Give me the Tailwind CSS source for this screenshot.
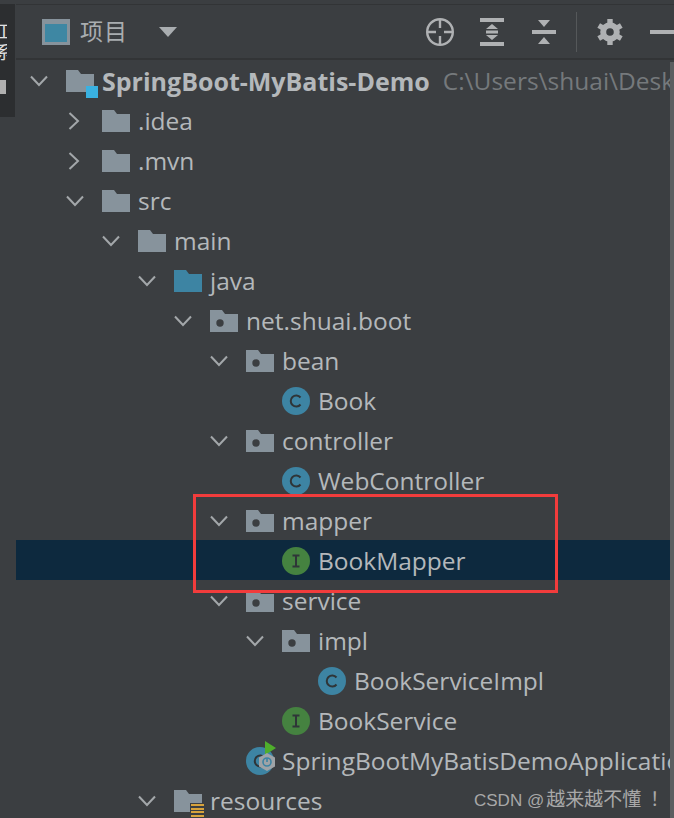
<!DOCTYPE html>
<html lang="en">
<head>
<meta charset="UTF-8">
<title>Project</title>
<script src="https://cdn.jsdelivr.net/npm/@tailwindcss/browser@4"></script>
</head>
<body class="bg-[#3b3e41] font-['Open_Sans','Noto_Sans_CJK_SC',sans-serif] text-[#b4b8bb]">
<svg class="hidden">
  <symbol id="down" viewBox="0 0 18 12"><path d="M1 1.5 9 10 17 1.5" fill="none" stroke="#a3a7aa" stroke-width="2"/></symbol>
  <symbol id="right" viewBox="0 0 12 18"><path d="M1.5 1 10 9 1.5 17" fill="none" stroke="#a3a7aa" stroke-width="2"/></symbol>
  <symbol id="folder" viewBox="0 0 28 22"><path d="M0 0H12L15 4H28V22H0Z" fill="#87939c"/></symbol>
  <symbol id="pkg" viewBox="0 0 28 22"><path d="M0 0H12L15 4H28V22H0Z" fill="#87939c"/><circle cx="10" cy="13" r="3.7" fill="#3b3e41"/></symbol>
  <symbol id="cls" viewBox="0 0 28 28"><circle cx="14" cy="14" r="14" fill="#3d84a3"/><path d="M18.5 10.5A5.500 5.500 0 1 0 18.500 17.500" fill="none" stroke="#2f3538" stroke-width="2"/></symbol>
  <symbol id="ifc" viewBox="0 0 28 28"><circle cx="14" cy="14" r="14" fill="#458240"/><path d="M10.5 8.500h7M10.500 19.500h7M14 8.500v11" fill="none" stroke="#2f3538" stroke-width="2"/></symbol>
</svg>

<div class="flex h-[818px] overflow-hidden">
  <!-- tool window strip -->
  <div class="w-[16px] shrink-0 flex flex-col">
    <div class="w-[15px] h-[113px] mt-[4px] bg-[#2c2e30] relative">
      <div class="absolute left-0 top-[17px] w-[7px] h-[48px] overflow-hidden">
        <div lang="zh-CN" class="ml-[-5px] w-[18px] text-[18px] leading-[21px] text-[#e0e0e0]">工系</div>
      </div>
      <div class="absolute left-0 top-[76px] w-[6px] h-[14px] bg-[#b0b0b0]"></div>
    </div>
  </div>

  <div class="flex-1 min-w-0 flex flex-col">
    <div class="h-[4px] shrink-0"></div>
    <div class="h-px shrink-0 bg-[#323436]"></div>
    <!-- header -->
    <div class="h-[53px] shrink-0 flex items-center">
      <div class="ml-[26px] w-[28px] h-[26px] border-[3px] border-t-[5px] border-[#87939c] bg-[#3e87a3]"></div>
      <span class="ml-[10px] text-[23px] tracking-[1px] text-[#a9adb0]">项目</span>
      <svg class="ml-[31px] w-[18px] h-[10px]" viewBox="0 0 18 10"><path d="M0 0H18L9 10Z" fill="#a9adb0"/></svg>
      <div class="ml-auto flex items-center">
        <svg class="w-[30px] h-[30px]" viewBox="0 0 30 30"><circle cx="15" cy="15" r="12.8" fill="none" stroke="#afb1b3" stroke-width="2.4"/><path d="M15 2v9M15 19v9M2 15h9M19 15h9" stroke="#afb1b3" stroke-width="2.4"/></svg>
        <svg class="ml-[25px] w-[24px] h-[28px]" viewBox="0 0 24 28"><path d="M0 0H24V4H0ZM0 24H24V28H0ZM12 6l6 5H6ZM12 22l-6-5H18ZM6 12.500H18V15.500H6Z" fill="#afb1b3"/></svg>
        <svg class="ml-[28px] w-[24px] h-[26px]" viewBox="0 0 24 26"><path d="M0 11H24V15H0ZM6 1H18L12 8ZM6 25H18L12 18Z" fill="#afb1b3"/></svg>
        <div class="ml-[20px] w-px h-[40px] bg-[#55585a]"></div>
        <svg class="ml-[20px] w-[26px] h-[26px]" viewBox="0 0 26 26"><circle cx="13" cy="13" r="6.800" fill="none" stroke="#afb1b3" stroke-width="6"/><path d="M13 0v5M13 21v5M1.700 6.500l4.400 2.500M19.900 17l4.400 2.500M1.700 19.500l4.400-2.500M19.900 9l4.400-2.500" stroke="#afb1b3" stroke-width="5.400"/></svg>
        <div class="ml-[27px] w-[24px] h-[4px] bg-[#afb1b3]"></div>
      </div>
    </div>
    <div class="h-[2px] shrink-0 bg-[#323436]"></div>

    <!-- project tree -->
    <div class="shrink-0 text-[24.5px] leading-[40px] whitespace-nowrap relative [&_svg]:shrink-0">
      <div class="h-[40px] mt-[1px] flex items-center pl-[14px]">
        <svg class="w-[18px] h-[12px]"><use href="#down"/></svg>
        <span class="relative shrink-0 ml-[18px] w-[30px] h-[22px]">
          <svg class="w-[28px] h-[22px]"><use href="#folder"/></svg>
          <span class="absolute right-[-2px] bottom-[-6px] w-[12px] h-[12px] bg-[#39b1e1]"></span>
        </span>
        <span class="ml-[6px] font-bold text-[25px]">SpringBoot-MyBatis-Demo</span>
        <span class="ml-[13px] text-[#75797c]">C:\Users\shuai\Desktop</span>
      </div>
      <div class="h-[40px] flex items-center pl-[52px]"><svg class="w-[12px] h-[18px]"><use href="#right"/></svg><svg class="ml-[22px] w-[28px] h-[22px]"><use href="#folder"/></svg><span class="ml-[8px]">.idea</span></div>
      <div class="h-[40px] flex items-center pl-[52px]"><svg class="w-[12px] h-[18px]"><use href="#right"/></svg><svg class="ml-[22px] w-[28px] h-[22px]"><use href="#folder"/></svg><span class="ml-[8px]">.mvn</span></div>
      <div class="h-[40px] flex items-center pl-[50px]"><svg class="w-[18px] h-[12px]"><use href="#down"/></svg><svg class="ml-[18px] w-[28px] h-[22px]"><use href="#folder"/></svg><span class="ml-[8px]">src</span></div>
      <div class="h-[40px] flex items-center pl-[86px]"><svg class="w-[18px] h-[12px]"><use href="#down"/></svg><svg class="ml-[18px] w-[28px] h-[22px]"><use href="#folder"/></svg><span class="ml-[8px]">main</span></div>
      <div class="h-[40px] flex items-center pl-[122px]"><svg class="w-[18px] h-[12px]"><use href="#down"/></svg><svg class="ml-[18px] w-[28px] h-[22px]" viewBox="0 0 28 22"><path d="M0 0H12L15 4H28V22H0Z" fill="#3d84a3"/></svg><span class="ml-[8px]">java</span></div>
      <div class="h-[40px] flex items-center pl-[158px]"><svg class="w-[18px] h-[12px]"><use href="#down"/></svg><svg class="ml-[18px] w-[28px] h-[22px]"><use href="#pkg"/></svg><span class="ml-[8px]">net.shuai.boot</span></div>
      <div class="h-[40px] flex items-center pl-[194px]"><svg class="w-[18px] h-[12px]"><use href="#down"/></svg><svg class="ml-[18px] w-[28px] h-[22px]"><use href="#pkg"/></svg><span class="ml-[8px]">bean</span></div>
      <div class="h-[40px] flex items-center pl-[266px]"><svg class="w-[28px] h-[28px]"><use href="#cls"/></svg><span class="ml-[8px]">Book</span></div>
      <div class="h-[40px] flex items-center pl-[194px]"><svg class="w-[18px] h-[12px]"><use href="#down"/></svg><svg class="ml-[18px] w-[28px] h-[22px]"><use href="#pkg"/></svg><span class="ml-[8px]">controller</span></div>
      <div class="h-[40px] flex items-center pl-[266px]"><svg class="w-[28px] h-[28px]"><use href="#cls"/></svg><span class="ml-[8px]">WebController</span></div>
      <div class="h-[40px] flex items-center pl-[194px]"><svg class="w-[18px] h-[12px]"><use href="#down"/></svg><svg class="ml-[18px] w-[28px] h-[22px]"><use href="#pkg"/></svg><span class="ml-[8px]">mapper</span></div>
      <div class="h-[40px] -mt-px mb-px pt-[2px] flex items-center pl-[266px] bg-[#0d293e]"><svg class="w-[28px] h-[28px]"><use href="#ifc"/></svg><span class="ml-[8px]">BookMapper</span></div>
      <div class="h-[40px] flex items-center pl-[194px]"><svg class="w-[18px] h-[12px]"><use href="#down"/></svg><svg class="ml-[18px] w-[28px] h-[22px]"><use href="#pkg"/></svg><span class="ml-[8px]">service</span></div>
      <div class="h-[40px] flex items-center pl-[230px]"><svg class="w-[18px] h-[12px]"><use href="#down"/></svg><svg class="ml-[18px] w-[28px] h-[22px]"><use href="#pkg"/></svg><span class="ml-[8px]">impl</span></div>
      <div class="h-[40px] flex items-center pl-[302px]"><svg class="w-[28px] h-[28px]"><use href="#cls"/></svg><span class="ml-[8px]">BookServiceImpl</span></div>
      <div class="h-[40px] flex items-center pl-[266px]"><svg class="w-[28px] h-[28px]"><use href="#ifc"/></svg><span class="ml-[8px]">BookService</span></div>
      <div class="h-[40px] flex items-center pl-[230px]">
        <span class="relative shrink-0 w-[28px] h-[28px]">
          <svg class="w-[28px] h-[28px]"><use href="#cls"/></svg>
          <svg class="absolute left-[11px] top-[-6px] w-[22px] h-[34px]" viewBox="0 0 22 34"><path d="M8 0 19 7 8 14Z" fill="#4fae2c"/><path d="M10 12l8 4.500v9L10 30l-8-4.500v-9Z" fill="#9ea3a7"/><circle cx="10" cy="21" r="4" fill="none" stroke="#3d84a3" stroke-width="1.600"/><path d="M10 17v4" stroke="#3d84a3" stroke-width="1.600"/></svg>
        </span>
        <span class="ml-[8px]">SpringBootMyBatisDemoApplication</span>
      </div>
      <div class="h-[40px] flex items-center pl-[122px]"><svg class="w-[18px] h-[12px]"><use href="#down"/></svg>
        <span class="relative shrink-0 ml-[18px] w-[28px] h-[22px]">
          <svg class="w-[28px] h-[22px]"><use href="#folder"/></svg>
          <span class="absolute right-[-2px] bottom-[-6px] w-[14px] h-[15px] bg-[#3b3e41] flex flex-col justify-between pl-[1px] py-[1px]"><i class="block h-[2px] bg-[#d6a23c]"></i><i class="block h-[2px] bg-[#d6a23c]"></i><i class="block h-[2px] bg-[#d6a23c]"></i><i class="block h-[2px] bg-[#d6a23c]"></i></span>
        </span>
        <span class="ml-[8px]">resources</span>
      </div>

      <!-- highlight box drawn on the screenshot -->
      <div class="absolute left-[177px] top-[434px] w-[365px] h-[99px] border-[3px] border-[#f23c3c]"></div>
    </div>
  </div>
</div>

<div class="absolute left-[474px] top-[786px] text-[17px] leading-[24px] text-[#a8a8a8] font-['Liberation_Sans','Noto_Sans_CJK_SC',sans-serif]">CSDN @<span lang="zh-CN" class="ml-[2px] text-[19px] font-['Noto_Sans_CJK_SC',sans-serif]">越来越不懂</span><span lang="zh-TW" class="ml-[4px] text-[19px] font-['Noto_Sans_CJK_TC',sans-serif]">！</span></div>
<div class="absolute right-0 top-[62px] w-[4px] h-[756px] bg-[#5b5e60]"></div>
</body>
</html>
